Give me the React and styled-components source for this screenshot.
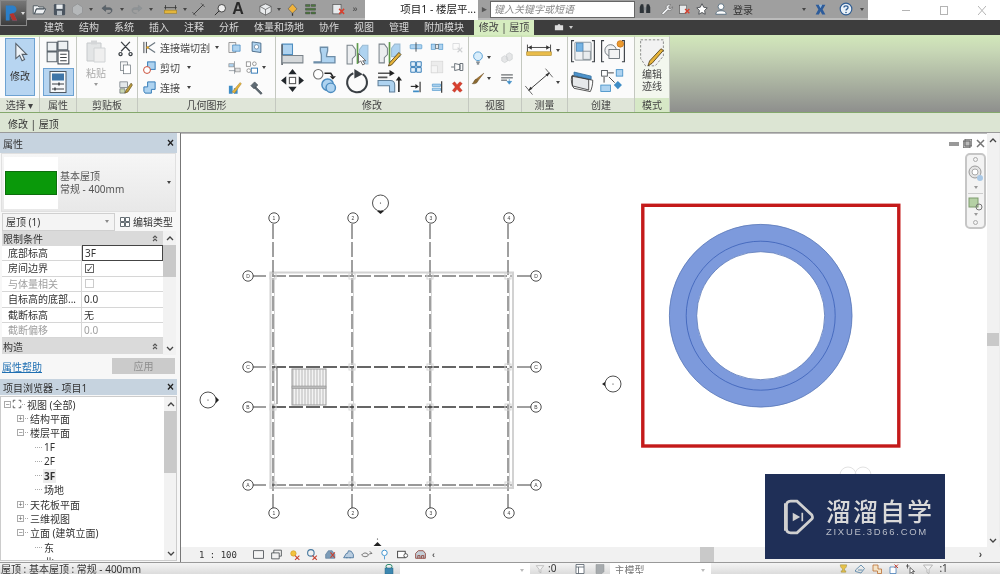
import React from "react";
import styled, { createGlobalStyle } from "styled-components";

const Global = createGlobalStyle`
  html, body { margin: 0; padding: 0; background: #fff; }
  * { box-sizing: border-box; }
`;

const Shell = styled.div`
  position: relative;
  width: 1000px;
  height: 574px;
  overflow: hidden;
  display: flex;
  flex-direction: column;
  font-family: "Noto Sans", "Noto Sans CJK SC", sans-serif;
  font-size: 10px;
  color: #333;
  background: #ececec;
  filter: blur(0.4px);
`;

/* ---------- drawings for the toolbar buttons ---------- */
const B = "#3f8dc6";
const LB = "#aed3f0";
const LG = "#d5d8da";
const D = "#3a3f44";

const shapes = {
  cursor: <path d="M7 2v18l4.500-4 3 6.500 3-1.400-3-6.300H20z" fill="#eef3f8" stroke="#56606a" strokeWidth="1.300" />,
  typeTiles: (
    <>
      <path d="M2 3h9v8H2zM12 2h9v8h-9zM2 12h9v9H2z" fill="#eef1f3" stroke="#5b646c" />
      <rect x="12" y="11" width="10" height="12" fill="#fff" stroke="#3d4650" />
      <path d="M14 14h6M14 17h6M14 20h6" stroke={D} />
    </>
  ),
  props: (
    <>
      <rect x="4" y="1.500" width="16" height="21" fill="#f6f8fa" stroke="#4d5862" />
      <rect x="6" y="3.500" width="12" height="7" fill="#3f76a8" />
      <path d="M6 14h12M6 19h12" stroke={D} />
      <path d="M13 12.500v3M9 17.500v3" stroke={D} strokeWidth="1.500" />
    </>
  ),
  paste: (
    <>
      <path d="M3 4h14v18H3z" fill="#e3e5e6" stroke="#c6c9cb" />
      <path d="M7 1.500h6v4H7z" fill="#d4d6d8" />
      <path d="M10 9h11v14H10z" fill="#efefef" stroke="#d0d3d5" />
    </>
  ),
  scissors: (
    <path d="M5 3l14 15M19 3L5 18M4 20a2.500 2.500 0 1 0 .1 0M20 20a2.500 2.500 0 1 0 .1 0" fill="none" stroke={D} strokeWidth="2" />
  ),
  copy: (
    <>
      <rect x="4" y="3" width="11" height="14" fill="#f5f5f5" stroke="#5a636b" />
      <rect x="9" y="8" width="11" height="14" fill="#fff" stroke="#5a636b" />
    </>
  ),
  match: (
    <>
      <rect x="3" y="3" width="12" height="9" fill="#e4e8ea" stroke="#59626a" />
      <path d="M3 14h8v7H3z" fill="#c8d6b0" stroke="#59626a" />
      <path d="M21 5l-8 11-2 5 5-2 7-11z" fill="#b99a3b" stroke="#5b4a1a" />
    </>
  ),
  trim: (
    <>
      <path d="M3 3v18M7 3v18" stroke={D} strokeWidth="1.500" />
      <path d="M21 4L9 12l12 8" fill="none" stroke="#6d7880" strokeWidth="2" />
      <circle cx="9" cy="12" r="2" fill="#e0a020" />
    </>
  ),
  cut: (
    <>
      <rect x="9" y="3" width="12" height="12" fill={LB} stroke="#2f78b5" strokeWidth="1.500" />
      <circle cx="8" cy="16" r="5.500" fill="#fff" stroke="#c8452f" strokeWidth="1.500" />
    </>
  ),
  join: <path d="M9 3h12v12h-6v6H5l-2-3V11h6z" fill={LB} stroke="#2f78b5" strokeWidth="1.500" />,
  geoA: (
    <>
      <path d="M3 4h11v16H3z" fill="#f1f1f1" stroke="#666" />
      <path d="M9 8h12v10H9z" fill={LB} stroke="#2f78b5" />
    </>
  ),
  geoB: (
    <>
      <path d="M5 3l14 2v15l-14-2z" fill={LB} stroke="#486a88" strokeWidth="1.500" />
      <circle cx="12" cy="11" r="3.500" fill="#fff" stroke="#486a88" />
    </>
  ),
  geoC: (
    <>
      <path d="M12 2v20M3 17h18" stroke="#6c7680" />
      <rect x="3" y="6" width="8" height="5" fill={LB} stroke="#888" />
      <rect x="13" y="13" width="8" height="6" fill="#e0e0e0" stroke="#888" />
    </>
  ),
  geoD: (
    <>
      <rect x="2" y="3" width="7" height="7" fill="#fff" stroke="#666" />
      <circle cx="15" cy="6" r="3" fill="none" stroke="#666" />
      <rect x="10" y="13" width="10" height="8" fill="#fff" stroke="#2f78b5" strokeWidth="1.500" />
      <circle cx="6" cy="17" r="3" fill="#fff" stroke="#666" />
    </>
  ),
  geoE: (
    <>
      <path d="M3 9h6v13H3zM11 13h6v9h-6z" fill="#3f8dc6" />
      <path d="M8 19L21 4l2 2-11 15z" fill="#e6b33a" stroke="#8a6a1e" strokeWidth=".6" />
    </>
  ),
  hammer: <path d="M3 9l6-6 5 5-6 6zM11 11l10 10-2 2L9 13z" fill="#5f6b74" stroke="#3c444a" />,
  align: (
    <>
      <path d="M2 3h10v10H2z" fill={LB} stroke="#4d8dc0" />
      <path d="M2 3v20" stroke="#5a6168" strokeWidth="1.500" />
      <path d="M2 14h20v7H2z" fill={LG} stroke="#7a838a" />
    </>
  ),
  offset: (
    <path d="M2 20h7v-6c0-3-1-3-1-5V6h7v3c0 2-1 2-1 5v1h8v6H2z" fill={LB} stroke="#6d8da8" strokeWidth="1.300" />
  ),
  mirrorA: (
    <>
      <path d="M2 4h5l3 4v6l-3 3v5H2z" fill="#eceef0" stroke="#7a838a" />
      <path d="M12 2v20" stroke="#5d9a4b" strokeWidth="1.600" />
      <path d="M22 4h-5l-3 4v9l6 5h2z" fill={LB} stroke="#9abbd3" />
      <path d="M13 12v9l2-2 2 4 2-1-2-3h3z" fill="#fff" stroke="#555" strokeWidth=".8" />
    </>
  ),
  mirrorB: (
    <>
      <path d="M2 3h5l3 4v6l-3 3v5H2z" fill="#eceef0" stroke="#7a838a" />
      <path d="M12 1v20" stroke="#5d9a4b" strokeWidth="1.600" />
      <path d="M22 3h-5l-3 4v8h8z" fill={LB} stroke="#9abbd3" />
      <path d="M21 11l-9 10-1 3 3-1 9-10z" fill="#e6b33a" stroke="#4c3c14" strokeWidth=".8" />
    </>
  ),
  move: (
    <>
      <rect x="9" y="9" width="6" height="6" fill="#fff" stroke="#555" />
      <path d="M12 1l4 5H8zM12 23l4-5H8zM1 12l5-4v8zM23 12l-5-4v8z" fill="#22272b" />
    </>
  ),
  copyShape: (
    <>
      <circle cx="6" cy="6" r="4.500" fill="#fff" stroke="#6d6d6d" />
      <circle cx="15" cy="16" r="5.500" fill={LB} stroke="#4d8dc0" strokeWidth="1.400" />
      <circle cx="18" cy="19" r="4.500" fill={LB} stroke="#4d8dc0" strokeWidth="1.400" />
      <path d="M12 5h6l2 3" fill="none" stroke="#222" strokeWidth="1.500" />
      <path d="M17 8h6l-3 3z" fill="#222" />
    </>
  ),
  rotate: (
    <>
      <path d="M8 5a9.500 9.500 0 1 0 9 1" fill="none" stroke="#3a3f44" strokeWidth="2" />
      <path d="M9 1l8 5-8 4z" fill="#3a3f44" />
    </>
  ),
  extend: (
    <>
      <path d="M1 5h14M1 9h9" stroke="#555" strokeWidth="1.500" />
      <path d="M12 2l5 3-5 3z" fill="#222" />
      <path d="M1 12h12a4 4 0 0 1 4 4v7h-5v-6H1z" fill={LB} stroke="#5f7f99" />
      <path d="M21 23v-13" stroke="#222" strokeWidth="1.500" />
      <path d="M18 12l3-4 3 4z" fill="#222" />
    </>
  ),
  splitA: (
    <>
      <rect x="2" y="8" width="20" height="7" rx="1" fill={LB} stroke="#3f8dc6" />
      <path d="M12 4v16" stroke="#3a3f44" strokeWidth="1.500" />
    </>
  ),
  splitB: (
    <>
      <rect x="2" y="7" width="7" height="9" fill={LB} stroke="#3f8dc6" />
      <rect x="15" y="7" width="7" height="9" fill={LB} stroke="#3f8dc6" />
      <rect x="10" y="8" width="4" height="7" fill="#fff" stroke="#3a3f44" />
    </>
  ),
  pinOff: (
    <>
      <path d="M5 6h11v10H5z" fill="none" stroke="#c9ccce" />
      <path d="M13 13l8 8M21 13l-8 8" stroke="#cfd1d3" strokeWidth="2" />
    </>
  ),
  array: <path d="M3 3h8v8H3zM13 3h8v8h-8zM3 13h8v8H3zM13 13h8v8h-8z" fill="#e3f0fa" stroke="#2f78b5" strokeWidth="1.600" />,
  scale: (
    <>
      <rect x="2" y="2" width="20" height="20" fill="#ececec" stroke="#d2d2d2" />
      <rect x="2" y="10" width="11" height="12" fill="#f5f5f5" stroke="#d2d2d2" />
    </>
  ),
  pin: <path d="M2 12h5M8 6l9 2v8l-9 2zM17 6v12h5V6z" fill="none" stroke="#59626a" strokeWidth="1.500" />,
  unpinA: (
    <>
      <path d="M19 3v18" stroke="#333" strokeWidth="2" />
      <path d="M3 11h10" stroke="#333" strokeWidth="2" />
      <path d="M11 7l6 4-6 4z" fill="#222" />
      <path d="M7 18h10v3H7z" fill={B} />
    </>
  ),
  unpinB: (
    <>
      <path d="M20 2v20" stroke="#333" strokeWidth="2" />
      <path d="M4 7h14v4H4zM4 14h14v4H4z" fill={LB} stroke={B} />
    </>
  ),
  del: <path d="M4 6l4-3 4 5 5-5 4 3-5 6 5 6-4 3-5-5-4 5-4-3 5-6z" fill="#d8402e" stroke="#a92a1c" strokeWidth=".6" />,
  bulb: (
    <>
      <circle cx="12" cy="9" r="7.500" fill="#d8edfb" stroke="#4b97cf" strokeWidth="1.500" />
      <path d="M9 18h6v2H9zM10 21h4v2h-4z" fill="#5f6b74" />
    </>
  ),
  cubes: <path d="M3 11l5-3 5 3v6l-5 3-5-3zM11 6l5-3 5 3v8l-5 3-5-3z" fill="#e5e6e7" stroke="#c7c9cb" />,
  brush: (
    <>
      <path d="M22 2L9 12l3 3z" fill="#a5752f" stroke="#5c3e14" strokeWidth=".7" />
      <path d="M9 12c-4 1-3 5-7 8 5 1 9-1 10-5z" fill="#8c6a30" stroke="#4a3816" strokeWidth=".7" />
    </>
  ),
  hideLines: (
    <>
      <path d="M2 5h20M2 10h20" stroke="#3a3f44" strokeWidth="1.600" />
      <path d="M2 14h10" stroke="#3a3f44" strokeWidth="1.600" />
      <path d="M16 12v5M12 16h8l-4 5z" fill={B} stroke={B} />
    </>
  ),
  dimAlign: (
    <>
      <path d="M2 2v14M34 2v14M3 6h30" stroke="#333" strokeWidth="1.200" fill="none" />
      <path d="M3 6l5-3v6zM33 6l-5-3v6z" fill="#333" />
      <rect x="1" y="12" width="34" height="5" fill="#e9bc4a" stroke="#a98420" strokeWidth=".8" />
    </>
  ),
  dimDiag: (
    <>
      <path d="M4 28L32 4" stroke="#333" strokeWidth="1.300" />
      <path d="M-1 22l10 12M27 -2l10 12" stroke="#333" strokeWidth="1" />
      <path d="M3 29l3-6 3 3zM33 3l-3 6-3-3z" fill="#333" />
    </>
  ),
  create1: (
    <>
      <path d="M5 2H2v26h3M27 2h3v26h-3" fill="none" stroke="#3a3f44" strokeWidth="1.400" />
      <rect x="6" y="4" width="20" height="22" rx="1" fill="#eef1f3" stroke="#7a858d" />
      <rect x="8" y="5" width="8" height="10" fill="#76b4e4" stroke="#4a86b8" />
      <rect x="16" y="15" width="9" height="10" fill="#e8ecee" stroke="#7a858d" />
    </>
  ),
  create2: (
    <>
      <path d="M5 2H2v26h3M27 2h3v26h-3" fill="none" stroke="#3a3f44" strokeWidth="1.400" />
      <circle cx="13" cy="14" r="7" fill="#f2f3f4" stroke="#59626a" />
      <rect x="11" y="13" width="13" height="11" fill="#f2f3f4" stroke="#59626a" />
      <circle cx="25" cy="6" r="4" fill="#eb9a2d" stroke="#c8741a" />
    </>
  ),
  create3: (
    <>
      <path d="M3 9l20 5v13L3 22z" fill="#e6e8ea" stroke="#333" />
      <path d="M5 5l21 5v4L5 9z" fill="#4d93cc" stroke="#33709f" />
      <path d="M2 10c-1 6 0 12 3 15l20 4c2-4 3-9 3-14z" fill="none" stroke="#333" />
    </>
  ),
  create4: (
    <>
      <rect x="2" y="3" width="7" height="7" fill="#fff" stroke="#3a3f44" />
      <rect x="20" y="2" width="8" height="8" fill={LB} stroke={B} />
      <path d="M10 6h7M5 11v7M11 11l7 7" stroke="#222" />
      <rect x="1" y="21" width="12" height="8" fill={LB} stroke={B} />
      <path d="M22 16l5 5-5 5-5-5z" fill={B} />
    </>
  ),
  sketch: (
    <>
      <path d="M2 1h28v20l-10 12H8L2 24z" fill="#f2f2f2" stroke="#777" strokeDasharray="3 2" />
      <path d="M30 14L16 30l-5 3 2-6 14-15z" fill="#e6b33a" stroke="#4c3c14" />
    </>
  ),
  open: <path d="M2 6h7l2 2h8v3H7l-3 8h-2zM7 11h15l-4 8H4z" fill="#eef0f2" stroke="#3f4a52" strokeWidth="1.300" />,
  save: (
    <>
      <rect x="3" y="3" width="18" height="18" rx="2" fill="#4b5560" />
      <rect x="7" y="4" width="10" height="7" fill="#e9edf0" />
      <rect x="8" y="14" width="8" height="7" fill="#b7bfc5" />
    </>
  ),
  sync: <path d="M4 8l8-5 8 5v9l-8 5-8-5z" fill="#b5b8ba" stroke="#8b8d8f" />,
  undo: <path d="M9 5L3 10l6 5v-3h7c3 0 3 5-1 6h-3c8 2 10-9 3-9H9z" fill="#5a646c" stroke="#444c52" strokeWidth=".7" />,
  redo: <path d="M15 5l6 5-6 5v-3H8c-3 0-3 5 1 6h3c-8 2-10-9-3-9h6z" fill="#8f9497" stroke="#85898c" strokeWidth=".7" />,
  qatDim: (
    <>
      <path d="M2 9h20M4 5v7M20 5v7" stroke="#333" strokeWidth="1.300" />
      <rect x="2" y="13" width="20" height="5" fill="#e3b53a" stroke="#96761e" strokeWidth=".8" />
    </>
  ),
  qatDiag: (
    <>
      <path d="M4 20L20 4" stroke="#333" strokeWidth="1.400" />
      <path d="M2 16l6 6M16 2l6 6" stroke="#333" />
    </>
  ),
  tag: (
    <>
      <circle cx="14" cy="10" r="6" fill="#f0f0f0" stroke="#333" strokeWidth="1.400" />
      <path d="M3 21l7-7" stroke="#333" strokeWidth="1.600" />
    </>
  ),
  qatBox: (
    <>
      <path d="M12 3l9 4v9l-9 5-9-5V7z" fill="#e8eaec" stroke="#444" />
      <path d="M3 7l9 5 9-5M12 12v9" stroke="#444" fill="none" />
    </>
  ),
  qatBulb: (
    <>
      <path d="M12 3l7 8-7 7-7-7z" fill="#f0b33c" stroke="#555" />
      <path d="M12 18v4" stroke="#333" strokeWidth="2" />
    </>
  ),
  qatList: <path d="M4 4h7v3H4zM13 4h7v3h-7zM4 10h16v3H4zM4 16h7v3H4zM13 16h7v3h-7z" fill="#4f7d3c" stroke="#3b3f44" strokeWidth=".7" />,
  qatWin: (
    <>
      <rect x="3" y="4" width="13" height="15" fill="#e8eaec" stroke="#444" />
      <path d="M13 11l8 8M21 11l-8 8" stroke="#d8402e" strokeWidth="2.400" />
    </>
  ),
  binoc: (
    <>
      <path d="M3 9l2-5h4l1 6v9H3zM14 10l1-6h4l2 5v10h-7z" fill="#2d3338" />
      <path d="M10 9h4v5h-4z" fill="#8a8f94" />
    </>
  ),
  wrench: <path d="M20 3l-4 4 1 3 3 1 3-4c1 5-4 8-8 6L6 22l-3-3 9-9c-2-4 2-8 8-7z" fill="#eef0f2" stroke="#555" />,
  star: <path d="M12 3l3 6 6 1-4.500 4.500 1 6.500-5.500-3-5.500 3 1-6.500L3 10l6-1z" fill="#fff" stroke="#3b3f44" strokeWidth="1.400" />,
  user: (
    <>
      <circle cx="12" cy="8" r="5" fill="#fff" stroke="#4c6478" strokeWidth="1.400" />
      <path d="M3 21c0-5 5-6 9-6s9 1 9 6z" fill="#fff" stroke="#4c6478" strokeWidth="1.400" />
    </>
  ),
  xlogo: (
    <>
      <path d="M3 3h6l3 6 3-6h6l-5 9 5 9h-6l-3-6-3 6H3l5-9z" fill="#2d5c9b" />
      <path d="M9 3l3 6 3-6" fill="#8db7e0" />
    </>
  ),
  help: (
    <>
      <circle cx="12" cy="12" r="10" fill="#eaf1f8" stroke="#2f5d93" strokeWidth="2" />
      <path d="M8.500 9.500c0-4 7-4 7 0 0 3-3.500 2.500-3.500 5" fill="none" stroke="#2f5d93" strokeWidth="2.200" />
      <circle cx="12" cy="18" r="1.400" fill="#2f5d93" />
    </>
  ),
  camera: <path d="M3 7h6l1-2h4l1 2h6v11H3z" fill="#dcdcdc" />,
  tiles: <path d="M3 3h8v8H3zM13 3h8v8h-8zM3 13h8v8H3zM13 13h8v8h-8z" fill="#fff" stroke="#3f4a52" strokeWidth="1.600" />,
  viewFrame: <path d="M8 3H3v5M16 3h5v5M8 21H3v-5M16 21h5v-5" fill="none" stroke="#444" strokeWidth="2" />,
  detail1: <rect x="3" y="5" width="18" height="14" fill="#f4f4f4" stroke="#3a3f44" strokeWidth="1.400" />,
  detail2: <path d="M3 9h14v11H3zM7 9V4h14v11h-4" fill="none" stroke="#3a3f44" strokeWidth="1.400" />,
  sun: (
    <>
      <circle cx="10" cy="10" r="5" fill="#f3c23e" stroke="#c89116" />
      <path d="M13 14l8 8M21 14l-8 8" stroke="#c8402e" strokeWidth="2" />
    </>
  ),
  shadow: (
    <>
      <circle cx="9" cy="9" r="6" fill="none" stroke="#45789f" strokeWidth="2" />
      <path d="M12 14l8 8M20 14l-8 8" stroke="#c8402e" strokeWidth="2" />
    </>
  ),
  crop: (
    <>
      <path d="M3 12l5-7h7l5 7v7H3z" fill="#7d9cb8" stroke="#44688a" />
      <path d="M12 8l8 10M20 8l-8 10" stroke="#c8402e" strokeWidth="2" />
    </>
  ),
  cropB: <path d="M3 18l5-8h2l2-5 5 1 4 6v6zM8 18h2M14 18h2" fill="#b9cde0" stroke="#3f6d98" strokeWidth="1.500" />,
  hideEl: <path d="M3 13c4-5 9-5 13 0-4 4-9 4-13 0zM18 6l4 4-5 1" fill="none" stroke="#555" strokeWidth="1.500" />,
  pinDot: (
    <>
      <circle cx="12" cy="9" r="5" fill="#fff" stroke="#3f93cf" strokeWidth="1.800" />
      <path d="M12 15v6" stroke="#3f93cf" strokeWidth="1.600" />
    </>
  ),
  viewCam: (
    <>
      <rect x="3" y="6" width="14" height="12" fill="#fff" stroke="#333" strokeWidth="1.600" />
      <circle cx="18" cy="14" r="3.500" fill="#fff" stroke="#333" strokeWidth="1.400" />
    </>
  ),
  render: <path d="M3 19V10l5-5h9l4 5v9zM7 19v-5h4v5M14 19v-5h4v5" fill="#c5ced6" stroke="#8a3a30" strokeWidth="1.500" />,
  linked: (
    <>
      <rect x="6" y="3" width="12" height="8" rx="4" fill="none" stroke="#2e8b6f" strokeWidth="2" />
      <rect x="4" y="10" width="16" height="12" fill="#3c87b0" stroke="#296785" />
    </>
  ),
  filter: <path d="M3 4h18l-7 9v8l-4-2v-6z" fill="#f4f4f4" stroke="#9a9a9a" strokeWidth="1.300" />,
  panel1: <path d="M4 3h16v18H4zM4 8h16M9 8v13" fill="#fff" stroke="#4b5560" strokeWidth="1.500" />,
  panel2: <path d="M4 3h16v14l-4 4H4z" fill="#a6aaad" stroke="#8c9093" />,
  trophy: <path d="M5 4h14c0 5-3 8-5 9v4h3v3H7v-3h3v-4C8 12 5 9 5 4z" fill="#e7c24b" stroke="#8f8230" />,
  linkA: <path d="M3 14L14 4l7 7-7 9-11-3zM8 14h9" fill="none" stroke="#44789f" strokeWidth="1.500" />,
  linkB: <path d="M4 4h10v8h7v9h-8v-5H4z" fill="#f4e4c8" stroke="#b8682a" strokeWidth="1.500" />,
  linkC: (
    <>
      <path d="M4 8h12v13H4z" fill="#fff" stroke="#3f78b5" strokeWidth="1.500" />
      <path d="M13 3l7 7M20 3l-7 7" stroke="#c8402e" strokeWidth="2" />
    </>
  ),
  linkD: <path d="M5 2v9M2 6h7M10 9v12l3-3 2 4 2-1-2-4h4z" fill="#fff" stroke="#333" strokeWidth="1.400" />,
};

const Glyph = styled.svg`
  display: block;
  flex: none;
  overflow: visible;
`;

const Icon = ({ name, size = 16, w, h, box = "0 0 24 24" }) => (
  <Glyph width={w || size} height={h || size} viewBox={box}>
    {shapes[name]}
  </Glyph>
);

const Caret = styled.span`
  flex: none;
  width: 0;
  height: 0;
  border-left: 2.5px solid transparent;
  border-right: 2.5px solid transparent;
  border-top: 3px solid ${(p) => p.$color || "#444"};
  margin: 0 ${(p) => (p.$m === undefined ? 2 : p.$m)}px;
`;

/* ---------- title bar ---------- */
const TitleBar = styled.div`
  height: 20px;
  display: flex;
  flex: none;
  background: #fff;
`;

const AppButton = styled.div`
  position: absolute;
  left: 0;
  top: 0;
  width: 27px;
  height: 26px;
  background: linear-gradient(#777, #3d3d3d);
  border: 1px solid #888;
  display: flex;
  align-items: center;
  padding-left: 1px;
  z-index: 2;
`;

const Qat = styled.div`
  width: ${(p) => p.$w}px;
  flex: none;
  height: 20px;
  background: #9f9f9f;
  border-bottom: 2px solid #bbb;
  display: flex;
  align-items: center;
`;

const Slot = styled.div`
  width: ${(p) => p.$w}px;
  flex: none;
  display: flex;
  align-items: center;
  justify-content: center;
`;

const Letter = styled.span`
  font: bold 16px/18px "Liberation Sans", sans-serif;
  color: #2a2a2a;
`;

const Grip = styled.span`
  font: bold 9px/10px "Liberation Sans", sans-serif;
  color: #555;
`;

const DocTitle = styled.div`
  width: 113px;
  flex: none;
  text-align: right;
  padding-right: 2px;
  font-size: 10.5px;
  line-height: 19px;
  color: #222;
  white-space: nowrap;
`;

const SearchZone = styled(Qat)`
  padding-left: 3px;
`;

const SearchBox = styled.div`
  width: 145px;
  height: 17px;
  flex: none;
  margin-left: 3px;
  background: #fff;
  border: 1px solid #666;
  padding-left: 3px;
  font-size: 10px;
  line-height: 15px;
  font-style: italic;
  color: #8a8a8a;
`;

const Login = styled.span`
  width: 71px;
  flex: none;
  padding-left: 4px;
  font-size: 10px;
  color: #333;
`;

const WindowButtons = styled.div`
  flex: 1;
  display: flex;
  justify-content: flex-end;
  align-items: center;
  padding-right: 14px;
  gap: 30px;
`;

const WinGlyph = styled.svg`
  width: 8px;
  height: 9px;
  stroke: #b4b4b4;
  fill: none;
`;

/* ---------- tabs ---------- */
const TabBar = styled.div`
  height: 15px;
  flex: none;
  background: #3d3d3d;
  display: flex;
  align-items: center;
  padding-left: 44px;
  gap: 15px;
`;

const Tab = styled.span`
  color: #dadada;
  font-size: 10px;
  line-height: 15px;
  white-space: nowrap;
`;

const ActiveTab = styled(Tab)`
  width: 60px;
  height: 15px;
  margin-left: -5px;
  background: #d6ecc0;
  color: #444;
  text-align: center;
`;

const CamSlot = styled.div`
  display: flex;
  align-items: center;
  margin-left: 3px;
`;

/* ---------- ribbon ---------- */
const Ribbon = styled.div`
  height: 78px;
  flex: none;
  display: flex;
  background: linear-gradient(#d2e8ba, #c8d8b6 20%, #8e8f8d);
  border-bottom: 1px solid #84a86c;
`;

const Panel = styled.section`
  width: ${(p) => p.$w}px;
  flex: none;
  display: flex;
  flex-direction: column;
  border-right: 1px solid #c4c8c0;
  border-top: 2px solid #cfe6b8;
  background: ${(p) => (p.$mode ? "#f3f7ee" : "#fbfbfb")};
`;

const PanelBody = styled.div`
  height: 61px;
  flex: none;
  display: flex;
  padding-top: ${(p) => p.$top || 0}px;
`;

const PanelFoot = styled.div`
  flex: 1;
  background: ${(p) => (p.$mode ? "#d6e8c6" : "#dfe5d8")};
  text-align: center;
  font-size: 10px;
  line-height: 14px;
  color: #444;
  white-space: nowrap;
`;

const BigButton = styled.div`
  width: 30px;
  height: 58px;
  margin: 1px 0 0 5px;
  background: #b7d5f1;
  border: 1px solid #6da2d2;
  display: flex;
  flex-direction: column;
  align-items: center;
  padding-top: 3px;
  gap: 6px;
`;

const Col = styled.div`
  width: ${(p) => p.$w}px;
  flex: none;
  display: flex;
  flex-direction: column;
  align-items: center;
  padding-top: ${(p) => p.$pt || 0}px;
  gap: ${(p) => p.$gap || 0}px;
`;

const ActiveTile = styled.div`
  width: 31px;
  height: 28px;
  background: #b7d5f1;
  border: 1px solid #6da2d2;
  display: flex;
  align-items: center;
  justify-content: center;
`;

const Dim = styled.span`
  font-size: 10px;
  color: #aaa;
  line-height: 12px;
`;

const LabelRow = styled.div`
  height: 20px;
  display: flex;
  align-items: center;
  gap: 3px;
  padding-left: 4px;
  align-self: flex-start;
  font-size: 10px;
  color: #444;
  white-space: nowrap;
`;

const IconGrid = styled.div`
  display: grid;
  grid-template-columns: repeat(${(p) => p.$cols}, ${(p) => p.$cw}px);
  grid-auto-rows: ${(p) => p.$rh}px;
  align-items: center;
  justify-items: center;
  flex: none;
  margin-top: ${(p) => p.$mt || 0}px;
`;

const Cell = styled.div`
  display: flex;
  align-items: center;
`;

const ModeLabel = styled.div`
  text-align: center;
  font-size: 10px;
  line-height: 12px;
  color: #444;
  margin-top: 3px;
`;

/* ---------- options bar ---------- */
const OptionsBar = styled.div`
  height: 20px;
  flex: none;
  background: #dce5d3;
  border-bottom: 1px solid #9a9a9a;
  padding-left: 8px;
  font-size: 10px;
  line-height: 22px;
  color: #333;
`;

/* ---------- left column ---------- */
const Main = styled.div`
  flex: 1;
  min-height: 0;
  display: flex;
`;

const LeftColumn = styled.aside`
  width: 181px;
  flex: none;
  background: #f7f7f7;
  border-right: 1px solid #777;
  padding-right: 3px;
  display: flex;
  flex-direction: column;
`;

const PaneHead = styled.div`
  height: ${(p) => p.$h}px;
  flex: none;
  margin-top: ${(p) => p.$top || 0}px;
  background: #c6d3df;
  display: flex;
  align-items: center;
  justify-content: space-between;
  padding: 0 3px;
  font-size: 10px;
  color: #333;
`;

const CloseX = styled.span`
  font: bold 12px/12px "Liberation Sans", sans-serif;
  color: #222;
`;

const TypeCard = styled.div`
  height: 59px;
  flex: none;
  margin: 0 1px;
  background: linear-gradient(#f6f6f6, #e8e8e8);
  display: flex;
  align-items: center;
  border: 1px solid #e0e0e0;
`;

const Swatch = styled.div`
  width: 54px;
  height: 52px;
  margin-left: 2px;
  background: #fff;
  display: flex;
  align-items: center;
`;

const SwatchFill = styled.div`
  width: 52px;
  height: 24px;
  margin-left: 1px;
  background: #0a990a;
  border: 1px solid #0d6d0d;
`;

const TypeText = styled.div`
  flex: 1;
  margin-left: 2px;
  font-size: 10px;
  line-height: 13px;
  color: #555;
`;

const TypeRow = styled.div`
  height: 19px;
  flex: none;
  display: flex;
  align-items: center;
  padding-left: 2px;
`;

const TypeSelect = styled.div`
  width: 113px;
  height: 18px;
  flex: none;
  border: 1px solid #d0d0d0;
  background: #f4f4f4;
  display: flex;
  align-items: center;
  justify-content: space-between;
  padding: 0 3px;
  font-size: 10px;
`;

const EditType = styled.div`
  display: flex;
  align-items: center;
  gap: 2px;
  margin-left: 4px;
  font-size: 10px;
  white-space: nowrap;
`;

const GridArea = styled.div`
  height: 124px;
  flex: none;
  display: flex;
  padding-left: 2px;
`;

const GridTable = styled.div`
  width: 161px;
  flex: none;
`;

const GroupHead = styled.div`
  height: ${(p) => p.$h}px;
  background: #dadada;
  display: flex;
  align-items: center;
  justify-content: space-between;
  padding: 0 5px 0 1px;
  font-size: 10px;
  color: #333;
`;

const FoldGlyph = styled.svg`
  width: 6px;
  height: 7px;
  fill: none;
  stroke: #555;
  stroke-width: 1.100;
`;

const PropRow = styled.div`
  height: 15.4px;
  display: grid;
  grid-template-columns: 80px 81px;
  border-bottom: 1px solid #d6d6d6;
  background: #fff;
  font-size: 10px;
  line-height: 14px;
  color: ${(p) => (p.$off ? "#a0a0a0" : "#333")};
`;

const PropName = styled.div`
  padding-left: 6px;
  border-right: 1px solid #d6d6d6;
  white-space: nowrap;
  overflow: hidden;
`;

const PropValue = styled.div`
  padding-left: 2px;
  display: flex;
  align-items: center;
  ${(p) => p.$focus && "border: 1px solid #444; margin-top: -1px; height: 16px;"}
`;

const Check = styled.span`
  width: 9px;
  height: 9px;
  border: 1px solid ${(p) => (p.$off ? "#ccc" : "#666")};
  background: #fff;
  font: 9px/8px "DejaVu Sans", sans-serif;
  color: #333;
  text-align: center;
  margin-left: 1px;
`;

const Scroll = styled.div`
  width: 13px;
  flex: none;
  background: #f2f2f2;
  display: flex;
  flex-direction: column;
  align-items: center;
`;

const ScrollArrow = styled.svg`
  flex: none;
  width: 8px;
  height: 5px;
  margin: ${(p) => (p.$up ? "5px 0 4px" : "auto 0 4px")};
  fill: none;
  stroke: #444;
  stroke-width: 1.3;
`;

const ScrollThumb = styled.div`
  width: 100%;
  height: ${(p) => p.$h}px;
  background: #c9c9c9;
`;

const ApplyRow = styled.div`
  height: 22px;
  flex: none;
  display: flex;
  align-items: center;
  justify-content: space-between;
  padding: 0 2px;
`;

const HelpLink = styled.a`
  font-size: 10px;
  color: #1f6fb2;
  text-decoration: underline;
`;

const ApplyButton = styled.div`
  width: 63px;
  height: 16px;
  background: #cbcbcb;
  color: #8f8f8f;
  text-align: center;
  font-size: 10px;
  line-height: 16px;
`;

const Browser = styled.div`
  height: 165px;
  flex: none;
  display: flex;
  background: #fff;
  border: 1px solid #ccc;
  margin-top: 1px;
  overflow: hidden;
`;

const Tree = styled.div`
  width: 163px;
  flex: none;
`;

const TreeRow = styled.div`
  height: 14.3px;
  display: flex;
  align-items: center;
  padding-left: ${(p) => p.$indent}px;
  font-size: 10px;
  color: #333;
  white-space: nowrap;
`;

const Twist = styled.span`
  width: 7px;
  height: 7px;
  flex: none;
  border: 1px solid #aaa;
  font: 7px/5px "Liberation Sans", sans-serif;
  text-align: center;
  color: #555;
  margin-right: 1px;
`;

const Twig = styled.span`
  width: ${(p) => p.$w}px;
  flex: none;
  border-top: 1px dotted #aaa;
  margin-right: 1px;
`;

const Leaf = styled.span`
  font-weight: ${(p) => (p.$bold ? 700 : 400)};
  background: ${(p) => (p.$bold ? "#ededed" : "transparent")};
  padding: 0 1px;
`;

/* ---------- canvas ---------- */
const CanvasColumn = styled.div`
  position: relative;
  flex: 1;
  min-width: 0;
  display: flex;
  flex-direction: column;
`;

const CanvasRow = styled.div`
  flex: 1;
  min-height: 0;
  display: flex;
`;

const Sheet = styled.div`
  position: relative;
  width: 806px;
  flex: none;
  background: #fff;
  border-top: 1px solid #bbb;
  overflow: hidden;
`;

const SheetBar = styled.div`
  flex: none;
  width: 12px;
  background: #f1f1f1;
  display: flex;
  flex-direction: column;
  align-items: center;
`;

const SideThumb = styled.div`
  width: 100%;
  height: 13px;
  margin-top: 186px;
  background: #c9c9c9;
`;

const WindowTools = styled.div`
  position: absolute;
  top: 5px;
  right: 2px;
  display: flex;
  align-items: center;
  gap: 4px;
`;

const NavBar = styled.div`
  position: absolute;
  top: 19px;
  right: 1px;
  width: 21px;
  height: 76px;
  border: 2px solid #c6c6c6;
  border-radius: 5px;
  background: #f3f3f3;
  display: flex;
  flex-direction: column;
  align-items: center;
  padding-top: 2px;
  gap: 2px;
`;

const NavDot = styled.span`
  width: 5px;
  height: 5px;
  flex: none;
  border: 1px solid #aaa;
  border-radius: 50%;
  margin-top: ${(p) => (p.$end ? "auto" : 0)};
  margin-bottom: ${(p) => (p.$end ? "2px" : 0)};
`;

const NavDivider = styled.div`
  width: 15px;
  border-top: 1px solid #ccc;
  margin: 2px 0 1px;
`;

const ViewBar = styled.div`
  height: 15px;
  flex: none;
  background: #f1f1f1;
  display: flex;
  align-items: center;
`;

const Scale = styled.span`
  width: 71px;
  flex: none;
  padding-left: 18px;
  font-family: "DejaVu Sans Mono", monospace;
  font-size: 9px;
  color: #333;
  white-space: pre;
`;

const ViewTools = styled.div`
  display: flex;
  align-items: center;
  gap: 5px;
  width: 193px;
  flex: none;
`;

const Track = styled.div`
  flex: 1;
  display: flex;
  align-items: center;
  height: 100%;
`;

const TrackThumb = styled.div`
  width: 14px;
  height: 100%;
  margin-left: 255px;
  background: #c9c9c9;
`;

const TrackEnd = styled.span`
  margin-left: auto;
  padding-right: 18px;
  font: bold 10px/10px "Liberation Sans", sans-serif;
  color: #444;
`;

const Watermark = styled.div`
  position: absolute;
  left: 584px;
  top: 341px;
  width: 180px;
  height: 85px;
  background: #1f2f57;
  display: flex;
  align-items: center;
  padding-left: 14px;
  gap: 11px;
  z-index: 3;
`;

const MarkText = styled.div`
  display: flex;
  flex-direction: column;
  align-items: flex-start;
  gap: 3px;
  color: #d9d9d9;
`;

const MarkTitle = styled.div`
  font-family: "Noto Sans CJK SC", sans-serif;
  font-size: 25px;
  font-weight: 500;
  line-height: 26px;
  letter-spacing: 2px;
  white-space: nowrap;
`;

const MarkSub = styled.div`
  font-family: "Liberation Sans", sans-serif;
  font-size: 9.5px;
  line-height: 11px;
  letter-spacing: 1.7px;
  color: #b9bdc8;
  white-space: nowrap;
`;

/* ---------- status bar ---------- */
const StatusBar = styled.footer`
  height: 12px;
  flex: none;
  background: linear-gradient(#f4f4f4, #dcdcdc);
  border-top: 1px solid #999;
  display: flex;
  align-items: flex-start;
  overflow: hidden;
  font-size: 10px;
  line-height: 13px;
  color: #333;
  position: relative;
  z-index: 4;
`;

const StatusText = styled.span`
  width: 383px;
  flex: none;
  padding-left: 1px;
  white-space: nowrap;
`;

const Combo = styled.div`
  width: ${(p) => p.$w}px;
  height: 14px;
  flex: none;
  background: #fff;
  margin-left: ${(p) => p.$ml || 0}px;
  padding: 0 4px;
  display: flex;
  align-items: center;
  justify-content: space-between;
  color: #777;
  font-size: 10px;
`;

const StatusIcons = styled.div`
  display: flex;
  align-items: center;
  gap: ${(p) => p.$gap || 3}px;
  margin-left: ${(p) => p.$ml || 0}px;
  height: 11px;
`;

const Count = styled.span`
  font-size: 10px;
  line-height: 11px;
  color: #333;
`;

/* ---------- data ---------- */
const qat = [
  [null, 3], ["open", 18], [null, 2], ["save", 18], ["sync", 18], ["^", 10], [null, 2],
  ["undo", 18], ["^", 11], ["redo", 18], ["^", 11], [null, 6],
  ["qatDim", 16], [null, 2], ["^", 10], ["qatDiag", 16], [null, 4], ["tag", 20],
  ["A", 16], [null, 10], ["qatBox", 18], ["^", 10], ["qatBulb", 16], [null, 2],
  ["qatList", 16], [null, 10], ["qatWin", 20], [null, 2], [">>", 10],
];

const tabs = ["建筑", "结构", "系统", "插入", "注释", "分析", "体量和场地", "协作", "视图", "管理", "附加模块"];
const modifyBig = ["align", "offset", "mirrorA", "mirrorB", "move", "copyShape", "rotate", "extend"];
const modifySmall = ["splitA", "splitB", "pinOff", "array", "scale", "pin", "unpinA", "unpinB", "del"];
const viewIcons = ["detail1", "detail2", "sun", "shadow", "crop", "cropB", "hideEl", "pinDot", "viewCam", "render"];

const propRows = [
  { name: "底部标高", value: "3F", focus: true },
  { name: "房间边界", check: true },
  { name: "与体量相关", check: true, off: true },
  { name: "自标高的底部...", value: "0.0" },
  { name: "截断标高", value: "无" },
  { name: "截断偏移", value: "0.0", off: true },
];

const treeRows = [
  { label: "视图 (全部)", indent: 3, twist: "−", root: true },
  { label: "结构平面", indent: 16, twist: "+" },
  { label: "楼层平面", indent: 16, twist: "−" },
  { label: "1F", indent: 34, twig: 7 },
  { label: "2F", indent: 34, twig: 7 },
  { label: "3F", indent: 34, twig: 7, bold: true },
  { label: "场地", indent: 34, twig: 7 },
  { label: "天花板平面", indent: 16, twist: "+" },
  { label: "三维视图", indent: 16, twist: "+" },
  { label: "立面 (建筑立面)", indent: 16, twist: "−" },
  { label: "东", indent: 34, twig: 7 },
  { label: "北", indent: 34, twig: 7 },
];

/* ---------- floor plan ---------- */
const gridX = [273, 352, 430, 508];
const gridY = [276, 367, 407, 485];
const gridXNames = ["1", "2", "3", "4"];
const gridYNames = ["D", "C", "B", "A"];

const Bubble = ({ x, y, t }) => (
  <g>
    <circle cx={x} cy={y} r="5.200" fill="#fff" stroke="#222" strokeWidth=".8" />
    <text x={x} y={y + 1.8} fontSize="5" textAnchor="middle" fill="#444" fontFamily="Liberation Sans">{t}</text>
  </g>
);

const Plan = () => {
  const treads = [];
  for (let x = 293; x <= 325; x += 3) treads.push(x);
  return (
    <svg width="806" height="413" viewBox="181 134 806 413" style={{ display: "block" }}>
      {/* roof outline */}
      <rect x="270.500" y="272.500" width="242.500" height="215.500" fill="none" stroke="#d2d2d2" strokeWidth="2" />
      {gridX.map((x) => (
        <g key={x}>
          <path d={`M${x + 1.5} 277V485`} stroke="#d6d6d6" strokeWidth="1" />
          <path d={`M${x} 224V508`} stroke="#2a2a2a" strokeWidth=".9" strokeDasharray="15 3" fill="none" />
        </g>
      ))}
      {gridY.map((y, i) => (
        <g key={y}>
          <path d={`M253 ${y}H266`} stroke="#2a2a2a" strokeWidth=".9" />
          <path d={`M517 ${y}H531`} stroke="#2a2a2a" strokeWidth=".9" />
          <path d={`M272 ${y}H512`} stroke="#333" strokeWidth={i === 1 || i === 2 ? 1.3 : 1} strokeDasharray="14 3" fill="none" />
        </g>
      ))}
      {gridX.map((x) =>
        gridY.map((y) => <rect key={`${x}-${y}`} x={x - 3} y={y - 3} width="6" height="6" fill="none" stroke="#d6d6d6" />)
      )}
      {/* stair */}
      <path d="M276 368H277V404" fill="none" stroke="#666" />
      <rect x="292" y="369" width="34" height="36" fill="#f3f3f3" stroke="#999" />
      {treads.map((x) => (
        <path key={x} d={`M${x} 369V405`} stroke="#a0a0a0" strokeWidth=".7" />
      ))}
      <rect x="292" y="386" width="34" height="2.500" fill="#bbb" stroke="#888" strokeWidth=".5" />
      {gridX.map((x, i) => (
        <g key={x}>
          <Bubble x={x + 1} y={218} t={gridXNames[i]} />
          <Bubble x={x + 1} y={513} t={gridXNames[i]} />
        </g>
      ))}
      {gridY.map((y, i) => (
        <g key={y}>
          <Bubble x={248} y={y} t={gridYNames[i]} />
          <Bubble x={536} y={y} t={gridYNames[i]} />
        </g>
      ))}
      {/* elevation marks */}
      <circle cx="380.500" cy="203" r="8" fill="#fff" stroke="#222" strokeWidth=".8" />
      <circle cx="380.500" cy="203" r=".6" fill="#222" />
      <path d="M377 211h7l-3.500 3z" fill="#222" />
      <circle cx="208" cy="400" r="8" fill="#fff" stroke="#222" strokeWidth=".8" />
      <circle cx="208" cy="400" r=".6" fill="#222" />
      <path d="M216 397v6l3-3z" fill="#222" />
      <circle cx="613" cy="384" r="8" fill="#fff" stroke="#222" strokeWidth=".8" />
      <circle cx="613" cy="384" r=".6" fill="#222" />
      <path d="M605 382v4l-3-2z" fill="#222" />
      <path d="M373.500 546h8l-4-4z" fill="#222" />
      <circle cx="377.500" cy="539" r=".6" fill="#222" />
      {/* selected roof */}
      <rect x="642.800" y="205.300" width="256" height="240.700" fill="none" stroke="#c41a1a" strokeWidth="3.400" />
      <circle cx="760.700" cy="315.700" r="77.700" fill="none" stroke="#7d9adc" strokeWidth="27.500" />
      <circle cx="760.700" cy="315.700" r="91.300" fill="none" stroke="#5a79b8" strokeWidth=".8" />
      <circle cx="760.700" cy="315.700" r="64" fill="none" stroke="#5a79b8" strokeWidth=".8" />
      <circle cx="760.700" cy="315.700" r="74.500" fill="none" stroke="#3a5fb8" strokeWidth=".8" />
      <circle cx="848" cy="475" r="8" fill="none" stroke="#e2e2e2" />
      <circle cx="863" cy="475" r="8" fill="none" stroke="#e2e2e2" />
    </svg>
  );
};

const Chevron = ({ up }) => (
  <ScrollArrow $up={up} viewBox="0 0 8 5">
    <path d={up ? "M1 4l3-3 3 3" : "M1 1l3 3 3-3"} />
  </ScrollArrow>
);

const Fold = () => (
  <FoldGlyph viewBox="0 0 6 7">
    <path d="M1 3l2-2 2 2M1 6l2-2 2 2" />
  </FoldGlyph>
);

export default function App() {
  return (
    <Shell>
      <Global />
      <AppButton>
        <svg width="19" height="20" viewBox="0 0 20 20">
          <path d="M4 2h7c5 0 6 7 1 8l4 8h-5l-3-7v7H4z" fill="#2b7fc9" />
          <path d="M8 11l3 7h5l-4-8z" fill="#b5332c" />
        </svg>
        <Caret $color="#ddd" $m={0} />
      </AppButton>

      <TitleBar>
        <Slot $w={27} />
        <Qat $w={338}>
          {qat.map(([name, w], i) => (
            <Slot key={i} $w={w}>
              {name === "^" && <Caret />}
              {name === "A" && <Letter>A</Letter>}
              {name === ">>" && <Grip>»</Grip>}
              {name && shapes[name] && <Icon name={name} size={15} />}
            </Slot>
          ))}
        </Qat>
        <DocTitle>项目1 - 楼层平...</DocTitle>
        <SearchZone $w={390}>
          <Slot $w={6}><Grip>▸</Grip></Slot>
          <SearchBox>键入关键字或短语</SearchBox>
          <Slot $w={20}><Icon name="binoc" size={14} /></Slot>
          <Slot $w={22}><Icon name="wrench" size={13} /></Slot>
          <Slot $w={14}><Icon name="qatWin" size={13} /></Slot>
          <Slot $w={22}><Icon name="star" size={14} /></Slot>
          <Slot $w={16}><Icon name="user" size={14} /></Slot>
          <Login>登录</Login>
          <Caret />
          <Slot $w={24}><Icon name="xlogo" size={13} /></Slot>
          <Slot $w={28}><Icon name="help" size={14} /></Slot>
          <Caret $m={0} />
        </SearchZone>
        <WindowButtons>
          <WinGlyph viewBox="0 0 8 9"><path d="M0 4.500h8" /></WinGlyph>
          <WinGlyph viewBox="0 0 8 9"><rect x=".5" y=".5" width="7" height="8" /></WinGlyph>
          <WinGlyph viewBox="0 0 8 9"><path d="M0 0l8 9M8 0L0 9" /></WinGlyph>
        </WindowButtons>
      </TitleBar>

      <TabBar>
        {tabs.map((t) => (
          <Tab key={t}>{t}</Tab>
        ))}
        <ActiveTab>修改 | 屋顶</ActiveTab>
        <CamSlot>
          <Icon name="camera" w={14} h={11} />
          <Caret $color="#ccc" $m={3} />
        </CamSlot>
      </TabBar>

      <Ribbon>
        <Panel $w={40}>
          <PanelBody>
            <BigButton>
              <Icon name="cursor" size={20} />
              修改
            </BigButton>
          </PanelBody>
          <PanelFoot>选择 ▾</PanelFoot>
        </Panel>

        <Panel $w={37}>
          <PanelBody>
            <Col $w={36} $pt={2} $gap={3}>
              <Icon name="typeTiles" size={26} />
              <ActiveTile><Icon name="props" size={24} /></ActiveTile>
            </Col>
          </PanelBody>
          <PanelFoot>属性</PanelFoot>
        </Panel>

        <Panel $w={61}>
          <PanelBody>
            <Col $w={38} $pt={2} $gap={4}>
              <Icon name="paste" size={24} />
              <Dim>粘贴</Dim>
              <Caret $color="#999" />
            </Col>
            <IconGrid $cols={1} $cw={20} $rh={20}>
              <Icon name="scissors" size={15} />
              <Icon name="copy" size={15} />
              <Icon name="match" size={15} />
            </IconGrid>
          </PanelBody>
          <PanelFoot>剪贴板</PanelFoot>
        </Panel>

        <Panel $w={138}>
          <PanelBody>
            <Col $w={85}>
              <LabelRow>
                <Icon name="trim" size={15} />连接端切割<Caret />
              </LabelRow>
              <LabelRow>
                <Icon name="cut" size={15} />剪切<Caret $m={4} />
              </LabelRow>
              <LabelRow>
                <Icon name="join" size={15} />连接<Caret $m={4} />
              </LabelRow>
            </Col>
            <IconGrid $cols={2} $cw={22} $rh={20}>
              <Icon name="geoA" size={15} />
              <Icon name="geoB" size={15} />
              <Icon name="geoC" size={15} />
              <Cell><Icon name="geoD" size={15} /><Caret /></Cell>
              <Icon name="geoE" size={15} />
              <Icon name="hammer" size={15} />
            </IconGrid>
          </PanelBody>
          <PanelFoot>几何图形</PanelFoot>
        </Panel>

        <Panel $w={193}>
          <PanelBody>
            <IconGrid $cols={4} $cw={32.5} $rh={27} $mt={3}>
              {modifyBig.map((n) => (
                <Icon key={n} name={n} size={25} />
              ))}
            </IconGrid>
            <IconGrid $cols={3} $cw={20.5} $rh={20}>
              {modifySmall.map((n) => (
                <Icon key={n} name={n} size={14} />
              ))}
            </IconGrid>
          </PanelBody>
          <PanelFoot>修改</PanelFoot>
        </Panel>

        <Panel $w={53}>
          <PanelBody $top={10}>
            <IconGrid $cols={2} $cw={25} $rh={21}>
              <Cell><Icon name="bulb" size={14} /><Caret /></Cell>
              <Icon name="cubes" size={14} />
              <Cell><Icon name="brush" size={14} /><Caret /></Cell>
              <Icon name="hideLines" size={14} />
            </IconGrid>
          </PanelBody>
          <PanelFoot>视图</PanelFoot>
        </Panel>

        <Panel $w={46}>
          <PanelBody>
            <Col $w={45} $pt={6} $gap={13}>
              <Cell><Icon name="dimAlign" w={26} h={14} box="0 0 36 19" /><Caret $m={4} /></Cell>
              <Cell><Icon name="dimDiag" w={26} h={24} box="0 0 36 33" /><Caret $m={4} /></Cell>
            </Col>
          </PanelBody>
          <PanelFoot>测量</PanelFoot>
        </Panel>

        <Panel $w={67}>
          <PanelBody>
            <IconGrid $cols={2} $cw={30} $rh={29}>
              <Icon name="create1" size={26} box="0 0 32 32" />
              <Icon name="create2" size={26} box="0 0 32 32" />
              <Icon name="create3" size={26} box="0 0 32 32" />
              <Icon name="create4" size={26} box="0 0 32 32" />
            </IconGrid>
          </PanelBody>
          <PanelFoot>创建</PanelFoot>
        </Panel>

        <Panel $w={35} $mode>
          <PanelBody>
            <Col $w={34} $pt={2}>
              <Icon name="sketch" size={26} box="0 0 32 32" />
              <ModeLabel>编辑<br />迹线</ModeLabel>
            </Col>
          </PanelBody>
          <PanelFoot $mode>模式</PanelFoot>
        </Panel>
      </Ribbon>

      <OptionsBar>修改 | 屋顶</OptionsBar>

      <Main>
        <LeftColumn>
          <PaneHead $h={20}>属性<CloseX>×</CloseX></PaneHead>
          <TypeCard>
            <Swatch><SwatchFill /></Swatch>
            <TypeText>基本屋顶<br />常规 - 400mm</TypeText>
            <Caret $m={4} />
          </TypeCard>
          <TypeRow>
            <TypeSelect>屋顶 (1)<Caret $color="#888" /></TypeSelect>
            <EditType><Icon name="tiles" size={12} />编辑类型</EditType>
          </TypeRow>
          <GridArea>
            <GridTable>
              <GroupHead $h={15}>限制条件<Fold /></GroupHead>
              {propRows.map((r) => (
                <PropRow key={r.name} $off={r.off}>
                  <PropName>{r.name}</PropName>
                  <PropValue $focus={r.focus}>
                    {r.check ? <Check $off={r.off}>{r.off ? "" : "✓"}</Check> : r.value}
                  </PropValue>
                </PropRow>
              ))}
              <GroupHead $h={16}>构造<Fold /></GroupHead>
            </GridTable>
            <Scroll>
              <Chevron up />
              <ScrollThumb $h={32} />
              <Chevron />
            </Scroll>
          </GridArea>
          <ApplyRow>
            <HelpLink>属性帮助</HelpLink>
            <ApplyButton>应用</ApplyButton>
          </ApplyRow>
          <PaneHead $h={16} $top={2}>项目浏览器 - 项目1<CloseX>×</CloseX></PaneHead>
          <Browser>
            <Tree>
              {treeRows.map((r) => (
                <TreeRow key={r.label} $indent={r.indent}>
                  {r.twist && <Twist>{r.twist}</Twist>}
                  {r.root && <Icon name="viewFrame" size={10} />}
                  {r.twig && <Twig $w={r.twig} />}
                  {r.twist && !r.root && <Twig $w={3} />}
                  {r.root && <Twig $w={3} />}
                  <Leaf $bold={r.bold}>{r.label}</Leaf>
                </TreeRow>
              ))}
            </Tree>
            <Scroll>
              <Chevron up />
              <ScrollThumb $h={62} />
              <Chevron />
            </Scroll>
          </Browser>
        </LeftColumn>

        <CanvasColumn>
          <CanvasRow>
            <Sheet>
              <Plan />
              <WindowTools>
                <svg width="10" height="8" viewBox="0 0 10 8"><rect y="2" width="10" height="4" fill="#999" /></svg>
                <svg width="9" height="9" viewBox="0 0 9 9"><path d="M2 0h7v7H2zM0 2h7v7H0z" fill="#bbb" stroke="#666" /></svg>
                <svg width="9" height="9" viewBox="0 0 9 9"><path d="M1 1l7 7M8 1L1 8" stroke="#777" strokeWidth="1.500" /></svg>
              </WindowTools>
              <NavBar>
                <NavDot />
                <svg width="15" height="20" viewBox="0 0 15 20"><circle cx="7" cy="8" r="6" fill="#e4e4e4" stroke="#999" /><circle cx="7" cy="8" r="3" fill="#fff" stroke="#aaa" /><circle cx="12" cy="14" r="3" fill="#a9c8e6" /></svg>
                <Caret $color="#999" />
                <NavDivider />
                <svg width="15" height="14" viewBox="0 0 15 14"><rect x="1" y="1" width="9" height="9" fill="#b5d0a5" stroke="#7f9b6e" /><circle cx="11" cy="10" r="3" fill="none" stroke="#777" /></svg>
                <Caret $color="#999" />
                <NavDot $end />
              </NavBar>
            </Sheet>
            <SheetBar>
              <Chevron up />
              <SideThumb />
              <Chevron />
            </SheetBar>
          </CanvasRow>
          <ViewBar>
            <Scale>1 : 100</Scale>
            <ViewTools>
              {viewIcons.map((n) => (
                <Icon key={n} name={n} size={13} />
              ))}
              <Grip>‹</Grip>
            </ViewTools>
            <Track>
              <TrackThumb />
              <TrackEnd>›</TrackEnd>
            </Track>
          </ViewBar>
          <Watermark>
            <svg width="36" height="38" viewBox="0 0 34 36">
              <path d="M6 5v26M11 3h6l14 13c1 2 1 3 0 4L17 33h-6c-3 0-4-2-4-4V7c0-2 1-4 4-4z" fill="none" stroke="#d0d0d0" strokeWidth="2.600" />
              <path d="M13 14l7 4-7 4z" fill="#d0d0d0" />
              <path d="M22 14v8" stroke="#d0d0d0" strokeWidth="1.600" />
            </svg>
            <MarkText>
              <MarkTitle>溜溜自学</MarkTitle>
              <MarkSub>ZIXUE.3D66.COM</MarkSub>
            </MarkText>
          </Watermark>
        </CanvasColumn>
      </Main>

      <StatusBar>
        <StatusText>屋顶 : 基本屋顶 : 常规 - 400mm</StatusText>
        <Icon name="linked" size={12} />
        <Combo $w={130} $ml={5}><span /><Caret $color="#bbb" /></Combo>
        <StatusIcons $ml={5}>
          <Icon name="filter" size={10} />
          <Count>:0</Count>
        </StatusIcons>
        <StatusIcons $ml={18} $gap={8}>
          <Icon name="panel1" size={12} />
          <Icon name="panel2" size={12} />
        </StatusIcons>
        <Combo $w={101} $ml={4}>主模型<Caret $color="#bbb" /></Combo>
        <StatusIcons $ml={127} $gap={5}>
          <Icon name="trophy" size={11} />
          <Icon name="linkA" size={12} />
          <Icon name="linkB" size={12} />
          <Icon name="linkC" size={12} />
          <Icon name="linkD" size={12} />
          <Icon name="filter" size={12} />
          <Count>:1</Count>
        </StatusIcons>
      </StatusBar>
    </Shell>
  );
}
